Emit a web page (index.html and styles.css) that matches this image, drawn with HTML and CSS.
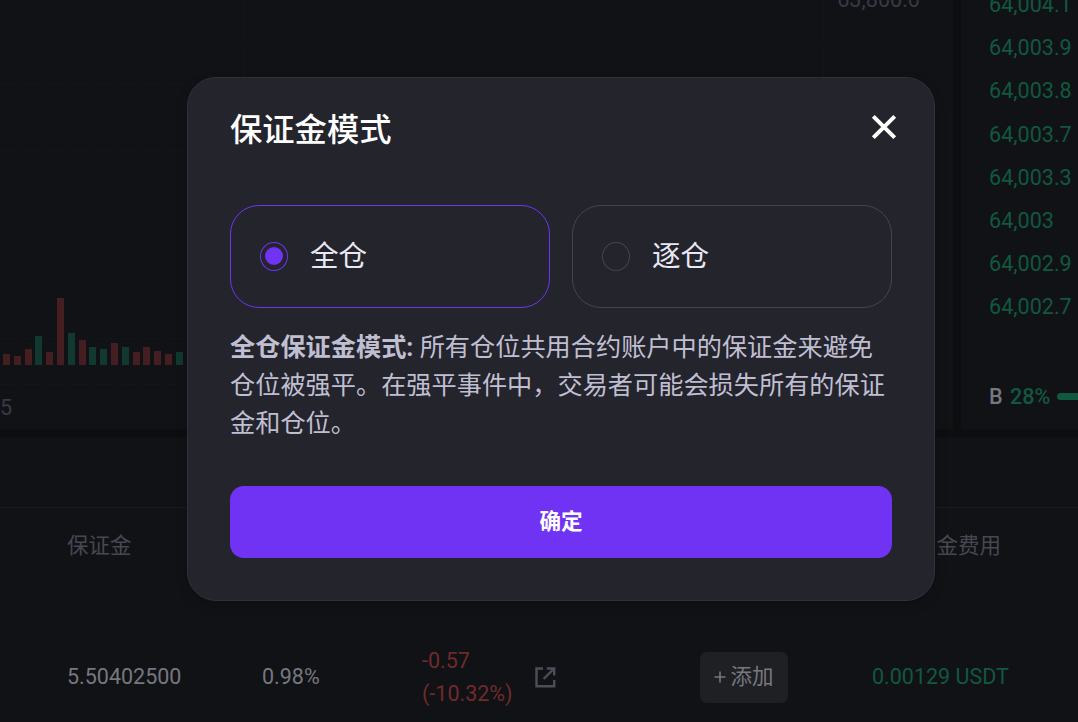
FILE: index.html
```html
<!DOCTYPE html>
<html lang="zh-CN">
<head>
<meta charset="utf-8">
<title>保证金模式</title>
<link rel="stylesheet" href="styles.css">
</head>
<body>
<main class="terminal">
  <div class="upper">
    <section class="chart">
      <div class="price-axis">63,800.0</div>
      <svg class="grid-lines" width="953" height="430" viewBox="0 0 953 430">
        <path d="M244.5 0V366M823.5 0V366M0 83.5H823M0 150.5H823M0 338.5H823M0 384.5H176" stroke="#181a1f" stroke-dasharray="1 2" fill="none"/>
      </svg>
      <div class="volume">
        <i class="bar sell" style="height:11px"></i>
        <i class="bar sell" style="height:9px"></i>
        <i class="bar sell" style="height:16px"></i>
        <i class="bar buy" style="height:29px"></i>
        <i class="bar sell" style="height:13px"></i>
        <i class="bar sell" style="height:67px"></i>
        <i class="bar buy" style="height:32px"></i>
        <i class="bar sell" style="height:25px"></i>
        <i class="bar buy" style="height:18px"></i>
        <i class="bar buy" style="height:16px"></i>
        <i class="bar sell" style="height:22px"></i>
        <i class="bar buy" style="height:18px"></i>
        <i class="bar sell" style="height:13px"></i>
        <i class="bar sell" style="height:18px"></i>
        <i class="bar sell" style="height:14px"></i>
        <i class="bar sell" style="height:11px"></i>
        <i class="bar buy" style="height:13px"></i>
      </div>
      <div class="time-axis">5</div>
    </section>
    <aside class="book">
      <ul class="prices">
        <li>64,004.1</li>
        <li>64,003.9</li>
        <li>64,003.8</li>
        <li>64,003.7</li>
        <li>64,003.3</li>
        <li>64,003</li>
        <li>64,002.9</li>
        <li>64,002.7</li>
      </ul>
      <div class="ratio"><span class="side">B</span><span class="pct">28%</span><span class="meter"></span></div>
    </aside>
  </div>
  <section class="positions">
    <div class="tabs"></div>
    <div class="row head">
      <span>保证金</span><span></span><span></span><span></span><span class="fee">资金费用</span>
    </div>
    <div class="row">
      <span>5.50402500</span>
      <span>0.98%</span>
      <span class="pnl">
        <span>-0.57<br>(-10.32%)</span>
        <svg width="21" height="21" viewBox="0 0 21 21" fill="none" stroke="#4d4d5a" stroke-width="2.4"><path d="M8 1.5H1.5V19.2H19.2V13M11.8 1.5H19.2V8.6M19 1.7L8.6 12"/></svg>
      </span>
      <span><button class="add"><svg width="12" height="12" viewBox="0 0 12 12" stroke="#77777f" stroke-width="1.6"><path d="M6 .5V11.5M.5 6H11.5"/></svg>添加</button></span>
      <span class="funding">0.00129 USDT</span>
    </div>
  </section>
</main>
<div class="overlay">
  <div class="modal" role="dialog">
    <header class="modal-head">
      <h1>保证金模式</h1>
      <svg class="close" width="26" height="26" viewBox="0 0 26 26" stroke="#fff" stroke-width="4"><path d="M2.3 2.3L23.7 23.7M23.7 2.3L2.3 23.7"/></svg>
    </header>
    <div class="options">
      <div class="option selected"><span class="radio"></span><span class="label">全仓</span></div>
      <div class="option"><span class="radio"></span><span class="label">逐仓</span></div>
    </div>
    <p class="note"><strong>全仓保证金模式:</strong> 所有仓位共用合约账户中的保证金来避免仓位被强平。在强平事件中，交易者可能会损失所有的保证金和仓位。</p>
    <button class="confirm">确定</button>
  </div>
</div>
</body>
</html>
```
FILE: styles.css
```css
* { box-sizing: border-box; }
body {
  margin: 0;
  width: 1078px;
  height: 722px;
  overflow: hidden;
  background: #0d0e10;
  color: #77777f;
  font: 21.6px/32px Roboto, "Noto Sans CJK SC", sans-serif;
}
button { border: 0; font: inherit; }
.terminal { display: flex; flex-direction: column; gap: 8px; height: 722px; }
.upper { display: grid; grid-template-columns: 953px 1fr; gap: 8px; height: 429px; }
.chart, .book, .positions { background: #111216; overflow: hidden; }
.chart { position: relative; display: flex; flex-direction: column; color: #393944; }
.grid-lines { position: absolute; left: 0; top: 0; }
.price-axis { width: 920px; height: 14px; line-height: 0; text-align: right; }
.volume {
  position: relative;
  display: flex;
  align-items: flex-end;
  gap: 3.8px;
  height: 351px;
  padding-left: 3px;
}
.bar { width: 7px; }
.sell { background: #451e21; }
.buy { background: #12392f; }
.time-axis { padding-top: 27px; }
.book { padding-left: 28px; }
.prices { margin: -17px 0 0; padding: 0; list-style: none; color: #10583f; }
.prices li { height: 43.2px; line-height: 43.2px; }
.ratio { display: flex; align-items: center; margin-top: 52px; font-weight: 500; white-space: nowrap; }
.side { width: 21px; }
.pct { width: 47px; color: #10583f; }
.meter { flex: 1; height: 7px; border-radius: 4px 0 0 4px; background: #10583f; }
.positions { flex: 1; font-size: 21.5px; }
.tabs { height: 71px; border-bottom: 1px solid #1a1b20; }
.row {
  display: grid;
  grid-template-columns: 195px 160px 278px 172px 1fr;
  align-items: center;
  height: 90px;
  margin-top: 48px;
  padding-left: 67px;
  white-space: nowrap;
}
.head { height: 76px; margin-top: 0; color: #474751; }
.fee { padding-left: 43px; }
.pnl { display: flex; align-items: center; gap: 22px; color: #702a2b; line-height: 33px; }
.add {
  display: flex;
  align-items: center;
  justify-content: center;
  gap: 4px;
  width: 88px;
  height: 51px;
  padding: 0;
  border-radius: 7px;
  background: #1f2024;
  color: #77777f;
}
.funding { color: #10583f; }
.overlay {
  position: absolute;
  inset: 0;
  padding: 77px 0 0 187px;
}
.modal {
  width: 748px;
  height: 524px;
  padding: 32px 42px 42px;
  border: 1px solid #303038;
  border-radius: 29px;
  background: #24242d;
  box-shadow: 0 4px 12px rgba(0, 0, 0, .2);
}
.modal-head { display: flex; justify-content: space-between; height: 95px; }
h1 { margin: 0; color: #fff; font-size: 32.3px; line-height: 40px; font-weight: 500; }
.close { margin: 4px -5px 0 0; }
.options { display: grid; grid-template-columns: 1fr 1fr; gap: 22px; }
.option {
  display: flex;
  align-items: center;
  gap: 22px;
  height: 103px;
  padding-left: 29px;
  border: 1px solid #44444f;
  border-radius: 29px;
  color: #e9e8f2;
  font-size: 28.6px;
}
.label { padding-bottom: 2px; }
.radio { width: 28px; height: 29px; padding: 4px; border: 1px solid #44444f; border-radius: 50%; }
.selected, .selected .radio { border-color: #7033f4; }
.selected .radio::before {
  content: "";
  display: block;
  width: 18px;
  height: 18px;
  border-radius: 50%;
  background: #7033f4;
}
.note { margin: 21px 0 43px; color: #c0bfd2; font-size: 25.2px; line-height: 38px; }
.note strong { font-weight: 700; }
.confirm {
  width: 100%;
  height: 72px;
  border-radius: 14px;
  background: #7033f4;
  color: #fff;
  font-weight: 700;
}
```
